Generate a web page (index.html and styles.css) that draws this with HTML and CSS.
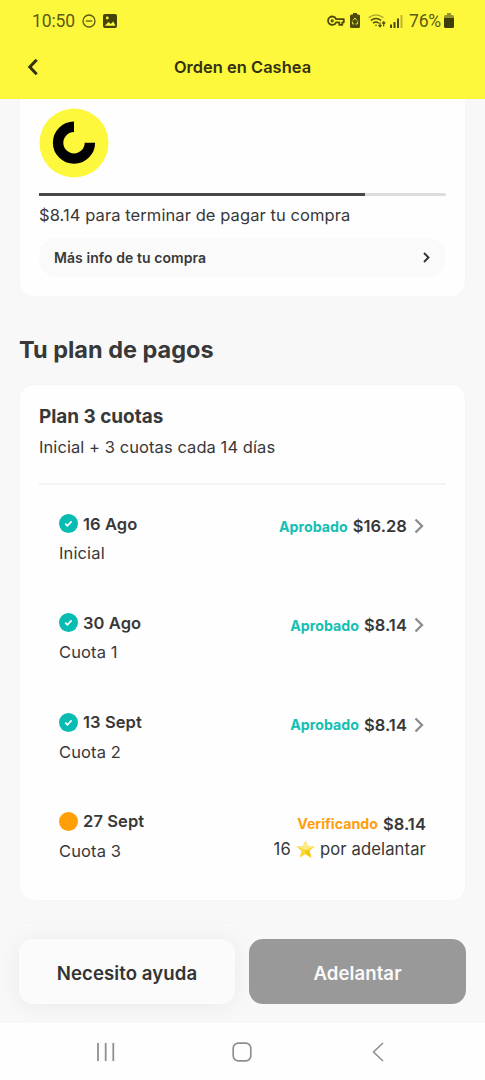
FILE: index.html
```html
<!DOCTYPE html>
<html lang="es">
<head>
<meta charset="utf-8">
<title>Orden en Cashea</title>
<link rel="stylesheet" href="styles.css">
</head>
<body>
<div class="screen">
  <header class="top">
    <div class="status">
      <span class="clock">10:50</span>
      <svg class="dnd" width="14" height="14" viewBox="0 0 14 14" fill="none" stroke="#5c5a12" stroke-width="1.3"><circle cx="7" cy="7" r="6"/><path d="M3.8 7h6.4"/></svg>
      <svg width="14" height="14" viewBox="0 0 14 14"><rect width="14" height="14" rx="2" fill="#454408"/><path d="M1.8 11.8 5.5 8l2.2 2 2.5-2.5 2.3 4.3z" fill="#fdf83c"/><circle cx="4.3" cy="4" r="1.4" fill="#fdf83c"/></svg>
      <span class="spacer"></span>
      <svg class="key" width="18" height="12" viewBox="0 0 18 12" fill="none" stroke="#4c4a0c" stroke-width="1.8"><path d="M9.1 4.1h7.7v3.2h-1.5v2.6h-3V7.3H9.1A4.2 4.2 0 1 1 9.1 4.1z" stroke-linejoin="round"/><circle cx="5.2" cy="5.8" r="1" stroke-width="1.3"/></svg>
      <svg class="saver" width="10" height="15" viewBox="0 0 10 15"><path d="M3 0h4v1.5h1.5Q10 1.5 10 3v10.500Q10 15 8.500 15h-7Q0 15 0 13.500V3Q0 1.500 1.500 1.500H3z" fill="#4c4a0c"/><path d="M3 7.500 5 5l2 2.500M7.800 8.500 7.300 11H5.500M2.200 8.500 2.700 11H4" fill="none" stroke="#e7e237"/></svg>
      <svg class="wifi" width="18" height="14" viewBox="0 0 18 14" fill="none" stroke="#4c4a0c" stroke-width="1.400"><path d="M.6 3.700Q8 -2 15.400 3.700" stroke="#a9a52a"/><path d="M2.700 6.500Q8 2.400 13.200 6.500M5 9.200Q8 6.800 10.700 9.200"/><circle cx="8" cy="11.300" r=".8" fill="#4c4a0c" stroke="none"/><path d="M12 8.500v4M10.500 11.200l1.500 1.700 1.500-1.700M15.700 12.500V8M14.200 9.500l1.500-1.700 1.500 1.700" stroke-width="1.200"/></svg>
      <svg class="signal" width="13" height="14" viewBox="0 0 13 14"><path d="M0 10.500h2V14H0zM3.500 8h2v6h-2zM7 4.500h2V14H7z" fill="#4c4a0c"/><path d="M10.500 1h2v13h-2z" fill="#bdb830"/></svg>
      <span class="pct">76%</span>
      <svg class="bat" width="10" height="15" viewBox="0 0 10 15"><path d="M3 0h4v2h1.500Q10 2 10 4v1H0V4Q0 2 1.500 2H3z" fill="#98942a"/><path d="M0 5h10v8.500Q10 15 8.500 15h-7Q0 15 0 13.500z" fill="#403e08"/></svg>
    </div>
    <div class="nav">
      <svg width="12" height="18" viewBox="0 0 12 18" fill="none" stroke="#33310f" stroke-width="3"><path d="M9.700 1.700 2.800 9l6.900 7.300"/></svg>
      <h1 class="title">Orden en Cashea</h1>
    </div>
  </header>
  <main class="content">
    <section class="card summary">
      <svg class="logo" width="70" height="70" viewBox="0 0 70 70"><circle cx="35" cy="35" r="34.500" fill="#fdf83c"/><path d="M35 18.800A15.900 15.900 0 1 0 50.900 34.700" fill="none" stroke="#000" stroke-width="10.400"/></svg>
      <div class="bar"><div class="fill"></div></div>
      <p class="remaining">$8.14 para terminar de pagar tu compra</p>
      <div class="more"><span>Más info de tu compra</span><svg width="7" height="11" viewBox="0 0 7 11" fill="none" stroke="#333" stroke-width="1.900"><path d="M1 1l4.500 4.500L1 10"/></svg></div>
    </section>
    <h2 class="heading">Tu plan de pagos</h2>
    <section class="card plan">
      <h3 class="plan-name">Plan 3 cuotas</h3>
      <p class="plan-desc">Inicial + 3 cuotas cada 14 días</p>
      <div class="rows">
        <div class="row">
          <div class="left"><div class="date"><svg width="19" height="19" viewBox="0 0 19 19"><circle cx="9.500" cy="9.500" r="9.500" fill="#08bcb2"/><path d="M6.200 9.700l2.200 2.100 4.200-4.500" fill="none" stroke="#fff" stroke-width="1.700"/></svg><span>16 Ago</span></div><div class="label">Inicial</div></div>
          <div class="right"><div class="amount"><span class="state ok">Aprobado</span><span class="money">$16.28</span><svg class="chev" width="10" height="16" viewBox="0 0 10 16" fill="none" stroke="#8c8c8c" stroke-width="2.300"><path d="M1.500 1.500 8 8l-6.500 6.500"/></svg></div></div>
        </div>
        <div class="row">
          <div class="left"><div class="date"><svg width="19" height="19" viewBox="0 0 19 19"><circle cx="9.500" cy="9.500" r="9.500" fill="#08bcb2"/><path d="M6.200 9.700l2.200 2.100 4.200-4.500" fill="none" stroke="#fff" stroke-width="1.700"/></svg><span>30 Ago</span></div><div class="label">Cuota 1</div></div>
          <div class="right"><div class="amount"><span class="state ok">Aprobado</span><span class="money">$8.14</span><svg class="chev" width="10" height="16" viewBox="0 0 10 16" fill="none" stroke="#8c8c8c" stroke-width="2.300"><path d="M1.500 1.500 8 8l-6.500 6.500"/></svg></div></div>
        </div>
        <div class="row">
          <div class="left"><div class="date"><svg width="19" height="19" viewBox="0 0 19 19"><circle cx="9.500" cy="9.500" r="9.500" fill="#08bcb2"/><path d="M6.200 9.700l2.200 2.100 4.200-4.500" fill="none" stroke="#fff" stroke-width="1.700"/></svg><span>13 Sept</span></div><div class="label">Cuota 2</div></div>
          <div class="right"><div class="amount"><span class="state ok">Aprobado</span><span class="money">$8.14</span><svg class="chev" width="10" height="16" viewBox="0 0 10 16" fill="none" stroke="#8c8c8c" stroke-width="2.300"><path d="M1.500 1.500 8 8l-6.500 6.500"/></svg></div></div>
        </div>
        <div class="row">
          <div class="left"><div class="date"><svg width="19" height="19" viewBox="0 0 19 19"><circle cx="9.500" cy="9.500" r="9.500" fill="#ff9f05"/></svg><span>27 Sept</span></div><div class="label">Cuota 3</div></div>
          <div class="right"><div class="amount"><span class="state wait">Verificando</span><span class="money">$8.14</span></div>
            <div class="points"><span>16</span><svg width="19" height="18" viewBox="0 0 18 17"><path d="M9 .3l2.300 5.600 6.400.3-4.900 4.200 1.700 6.400L9 13.200l-5.500 3.600 1.700-6.400L.3 6.200l6.400-.3z" fill="#fbd72f"/><path d="M9 .3l2.300 5.600 6.400.3L9 9.500.3 6.200l6.400-.3z" fill="#fdeb86"/><path d="M9 9.500l3.800.9 1.700 6.400L9 13.200z" fill="#f3c90e"/></svg><span>por adelantar</span></div></div>
        </div>
      </div>
    </section>
  </main>
  <footer class="actions">
    <button class="btn help">Necesito ayuda</button>
    <button class="btn advance">Adelantar</button>
  </footer>
  <nav class="system">
    <svg width="20" height="20" viewBox="0 0 20 20" stroke="#8f8f8f" stroke-width="1.800"><path d="M2 1v18M9.700 1v18M17.300 1v18"/></svg>
    <svg class="home" width="20" height="20" viewBox="0 0 20 20" fill="none" stroke="#8f8f8f" stroke-width="1.700"><rect x="1.200" y="1.200" width="17.600" height="17.600" rx="5"/></svg>
    <svg width="12" height="20" viewBox="0 0 12 20" fill="none" stroke="#8f8f8f" stroke-width="1.600"><path d="M11 1 1.500 10l9.500 9"/></svg>
  </nav>
</div>
</body>
</html>
```
FILE: styles.css
```css
* { box-sizing: border-box; }
body, h1, h2, h3, p { margin: 0; }
body { font-family: Inter, sans-serif; color: #383838; background: #f8f8f8; }
svg { display: block; flex: none; }
span { white-space: nowrap; }
.screen { width: 485px; height: 1080px; display: flex; flex-direction: column; overflow: hidden; background: #f8f8f8; }

.top { flex: none; height: 99px; background: #fdf83c; }
.status { height: 41px; padding: 0 31px 0 32px; display: flex; align-items: center; font-family: Roboto, sans-serif; font-size: 17.500px; color: #5c5a12; }
.clock { width: 50px; letter-spacing: -.1px; }
.dnd { margin-right: 7px; }
.spacer { flex: 1; }
.key { margin-right: 5px; }
.saver { margin-right: 8px; }
.wifi { margin-right: 4px; }
.signal { margin-right: 6px; }
.pct { width: 35px; letter-spacing: -.2px; }
.nav { height: 52px; display: grid; grid-template-columns: 64px 1fr 64px; align-items: center; }
.nav svg { margin-left: 27px; }
.title { font-size: 16.400px; font-weight: 600; letter-spacing: .05px; text-align: center; color: #33310f; }

.content { flex: 1; min-height: 0; padding: 0 20px; }
.card { background: #fefefe; box-shadow: 0 0 3px rgba(0,0,0,.025); border-radius: 14px; padding: 0 19px; }
.summary { height: 197px; border-radius: 0 0 14px 14px; padding-top: 9px; }
.bar { margin-top: 15px; background: #ddd; border-radius: 2px; }
.fill { width: 80%; background: #4a4747; }
.bar, .fill { height: 2.500px; }
.remaining { height: 24px; margin-top: 7.500px; line-height: 24px; font-size: 16.500px; letter-spacing: .08px; }
.more { margin-top: 11px; height: 39px; padding: 0 16px 0 15px; border-radius: 18px; background: #fafafa; display: flex; align-items: center; justify-content: space-between; font-size: 14px; font-weight: 600; letter-spacing: .07px; }
.heading { height: 88.500px; padding-top: 38px; margin-left: -1px; line-height: 32px; font-size: 23.500px; font-weight: 700; letter-spacing: 0; }
.plan { height: 515px; padding-top: 18px; }
.plan-name { font-size: 18.900px; line-height: 27px; font-weight: 700; }
.plan-desc { padding-top: 5px; height: 55px; border-bottom: 2px solid #f3f3f3; font-size: 16.500px; line-height: 24px; letter-spacing: .07px; }
.rows { padding: 26px 20px 0; }
.row { height: 99.300px; display: flex; justify-content: space-between; }
.date { display: flex; align-items: center; gap: 5px; height: 26px; font-size: 16.500px; font-weight: 600; letter-spacing: .1px; }
.label { margin-top: 3.500px; height: 26px; line-height: 26px; font-size: 16.500px; letter-spacing: .13px; }
.right { padding-top: 2.500px; display: flex; flex-direction: column; align-items: flex-end; }
.amount { display: flex; align-items: center; height: 26px; }
.state { font-size: 14.200px; font-weight: 700; margin-right: 5px; }
.ok { color: #14bfb3; }
.wait { color: #ff9f0f; }
.money { font-size: 16.500px; font-weight: 600; letter-spacing: .08px; }
.chev { margin-left: 7px; margin-right: 2px; }
.points { display: flex; align-items: center; gap: 5px; height: 24px; font-size: 16.600px; letter-spacing: .13px; }

.actions { flex: none; height: 101px; padding: 16px 19px 19px; display: grid; grid-template-columns: 216px 217px; gap: 14px; overflow: hidden; background: #f8f8f8; border-top: 1px solid #f5f5f5; }
.btn { height: 65px; border: 0; padding: 2px 0 0; border-radius: 14px; font-family: Inter, sans-serif; font-size: 18.600px; font-weight: 600; letter-spacing: .08px; }
.help { background: #fbfbfb; color: #333; box-shadow: 0 2px 24px rgba(0,0,0,.06); }
.advance { background: #999; color: #fafafa; }
.system { flex: none; height: 57px; padding: 0 101px 0 96px; display: flex; justify-content: space-between; align-items: center; background: #fefefe; }
.home { margin-right: 5px; }
```
